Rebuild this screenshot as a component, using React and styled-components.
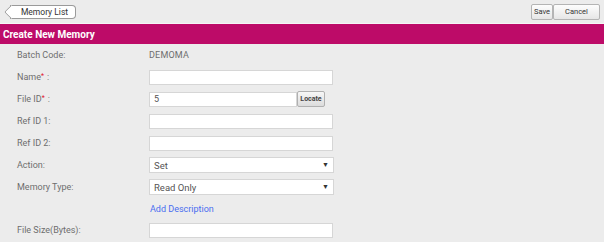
import React from "react";
import styled, { createGlobalStyle } from "styled-components";

const GlobalStyle = createGlobalStyle`
  html, body {
    margin: 0;
    padding: 0;
    background: #ececec;
  }
  body {
    font-family: Roboto, "Liberation Sans", sans-serif;
    color: #6b6b6b;
  }
`;

const Page = styled.div`
  width: 604px;
  height: 242px;
  overflow: hidden;
  background: #ececec;
`;

const TopBar = styled.div`
  height: 24px;
  display: flex;
  align-items: center;
  justify-content: space-between;
  padding: 0 4px 0 5px;
  box-sizing: border-box;
  border-bottom: 1px solid #f6f6f6;
`;

// the back button has a pointy left end
const BackButton = styled.button`
  position: relative;
  margin-left: 5px;
  height: 14px;
  width: 66px;
  padding: 0 0 0 4px;
  border: 1px solid #9a9a9a;
  border-left: none;
  border-radius: 0 4px 4px 0;
  background: #fff;
  font-family: Roboto, "Liberation Sans", sans-serif;
  font-size: 8.5px;
  color: #333;
  line-height: 12px;
  cursor: pointer;

  &::before {
    content: "";
    position: absolute;
    left: -4.5px;
    top: 1px;
    width: 9px;
    height: 9px;
    background: #fff;
    border-left: 1px solid #9a9a9a;
    border-bottom: 1px solid #9a9a9a;
    border-radius: 0 0 0 2px;
    transform: rotate(45deg);
  }
`;

const Actions = styled.div`
  display: flex;
`;

const ActionButton = styled.button`
  height: 16px;
  width: ${(p) => p.$w}px;
  padding: 0;
  border: 1px solid #b4b4b4;
  border-radius: 2px;
  background: linear-gradient(#fdfdfd, #e6e6e6);
  font-family: Roboto, "Liberation Sans", sans-serif;
  font-size: 7.5px;
  color: #333;
  cursor: pointer;
`;

const Header = styled.div`
  height: 20px;
  background: #bd0b68;
  color: #fff;
  font-weight: bold;
  font-size: 10px;
  display: flex;
  align-items: center;
  padding-left: 3px;
`;

const Form = styled.div`
  display: grid;
  grid-template-columns: 149px 1fr;
  grid-template-rows: repeat(8, 22px) 20px;
  align-items: center;
`;

const Label = styled.div`
  padding-left: 17px;
  font-size: 9px;
  color: #6e6e6e;
`;

const Star = styled.span`
  color: #e0102a;
  font-size: 7px;
  vertical-align: 2px;
  margin-right: 3px;
`;

const Value = styled.div`
  font-size: 9px;
  color: #6e6e6e;
  letter-spacing: 0.2px;
`;

const Input = styled.input`
  box-sizing: border-box;
  width: ${(p) => p.$w || 184}px;
  height: 15px;
  margin: 0;
  padding: 0 4px;
  border: 1px solid #d6d6d6;
  background: #fff;
  font-family: Roboto, "Liberation Sans", sans-serif;
  font-size: 9px;
  color: #555;
  outline: none;
`;

const InputGroup = styled.div`
  display: flex;
  align-items: center;
`;

const LocateButton = styled.button`
  box-sizing: border-box;
  width: 28px;
  height: 16px;
  padding: 0;
  border: 1px solid #b0b0b0;
  border-radius: 2px;
  background: linear-gradient(#f7f7f7, #dcdcdc);
  font-family: Roboto, "Liberation Sans", sans-serif;
  font-size: 7px;
  font-weight: bold;
  color: #444;
`;

const Select = styled.div`
  box-sizing: border-box;
  width: 185px;
  height: 16px;
  display: flex;
  align-items: center;
  justify-content: space-between;
  padding: 0 4px 0 4px;
  border: 1px solid #d6d6d6;
  background: #fff;
  font-size: 9.5px;
  color: #555;
`;

const Caret = styled.span`
  font-size: 7px;
  color: #333;
`;

const Link = styled.a`
  font-size: 9px;
  color: #4a6df0;
  text-decoration: none;
  padding-left: 1px;
`;

const Empty = styled.div``;

export default function App() {
  return (
    <Page>
      <GlobalStyle />
      <TopBar>
        <BackButton>Memory List</BackButton>
        <Actions>
          <ActionButton $w={22}>Save</ActionButton>
          <ActionButton $w={47}>Cancel</ActionButton>
        </Actions>
      </TopBar>
      <Header>Create New Memory</Header>
      <Form>
        <Label>Batch Code:</Label>
        <Value>DEMOMA</Value>

        <Label>
          Name<Star>*</Star>:
        </Label>
        <Input />

        <Label>
          File ID<Star>*</Star>:
        </Label>
        <InputGroup>
          <Input $w={148} defaultValue="5" />
          <LocateButton>Locate</LocateButton>
        </InputGroup>

        <Label>Ref ID 1:</Label>
        <Input />

        <Label>Ref ID 2:</Label>
        <Input />

        <Label>Action:</Label>
        <Select>
          <span>Set</span>
          <Caret>▼</Caret>
        </Select>

        <Label>Memory Type:</Label>
        <Select>
          <span>Read Only</span>
          <Caret>▼</Caret>
        </Select>

        <Empty />
        <Link href="#">Add Description</Link>

        <Label>File Size(Bytes):</Label>
        <Input />
      </Form>
    </Page>
  );
}
